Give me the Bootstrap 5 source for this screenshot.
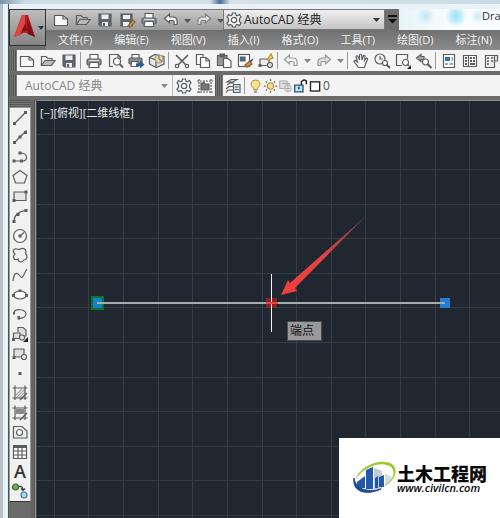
<!DOCTYPE html>
<html lang="zh-CN">
<head>
<meta charset="utf-8">
<meta name="viewport" content="width=device-width, initial-scale=1">
<title>AutoCAD 经典</title>
<link href="https://cdn.jsdelivr.net/npm/bootstrap@5.3.0/dist/css/bootstrap.min.css" rel="stylesheet">
<style>
body{font-family:"Open Sans","Noto Sans CJK SC",sans-serif;font-size:12px;line-height:16px;background:#dfeaf0;color:#333}
.shell{padding:9px 0 0 9px;background:linear-gradient(90deg,#b8c0c4 0 3px,#e6f2f7 3px 8px,#4a525a 8px 9px,transparent 9px),#e9f3f7}
.desk{height:4px;background:linear-gradient(90deg,#7894ad,#cddce4 5%,#d4e0e6 42%,#4e6c96 44%,#d8e2e8 46%,#c8dbe4)}
.app{background:#6b6b6b}
.head{background:linear-gradient(90deg,#6d6d6d,#747474)}
.logo-btn{width:37px;height:37px;background:linear-gradient(#bdbdbd,#858585);border:1px solid #333!important;flex:none}
.titlebar{height:21px;background:#edf6f9}
.quick{width:177px;padding-left:4px;background:linear-gradient(#c7c7c7,#9a9a9a);border-top:1px solid #777}
.tool{width:20px;height:20px;padding:0;border:0;background:none;display:flex;align-items:center;justify-content:center;flex:none;color:#5a5d60}
.tool svg,.stat svg{width:18px;height:18px;display:block}
.tool.caret-tool{width:11px;color:#888}
.caret-tool svg{width:7px;height:5px}
svg.ico{fill:none;stroke:currentColor;stroke-width:1.2}
.quick .tool{width:22px}
.quick .caret-tool{width:11px;color:#555}
.bar .tool[aria-label="undo"],.bar .tool[aria-label="redo"]{color:#9a9a9a}
.quick .tool[aria-label="redo"]{color:#808080}
.picker{position:relative;display:flex;align-items:center}
.picker select{appearance:none;border:0;background:none;width:100%;height:100%;padding:0;font:inherit;line-height:16px;color:inherit;outline:0}
.picker .arrow{position:absolute;right:4px;width:7px;height:5px;pointer-events:none}
.space{width:162px;background:linear-gradient(#f0f0f0,#c4c4c4);border:1px solid #777}
.space select{padding-left:0;color:#222}
.more{width:14px;background:#6e6e6e;color:#111;height:21px}
.more svg{width:9px;height:9px}
.glass{background:radial-gradient(circle at 26px 7px,#bfe6f5 0,transparent 9px),radial-gradient(circle at 57px 7px,#91def5 0,transparent 11px),radial-gradient(circle at 79px 7px,#cae9f3 0,transparent 8px),linear-gradient(90deg,#e6f4f8,#fafdfe 60%);padding-left:83px;flex:1 1 0;min-width:0;color:#333;font-size:11px;line-height:14px}
.menus{height:20px;gap:22px;padding-left:12px;background:linear-gradient(#707070,#8b8b8b);font-size:11px}
.menus a{color:#f2f2f2;text-decoration:none;white-space:nowrap}
.bar{height:21px;background:#f4f4f4;gap:1px}
.grip{width:8px;flex:none;background:repeating-linear-gradient(90deg,#555 0 1px,#777 1px 2px)}
.rule{width:3px;height:17px;border-left:1px solid #999;flex:none}
.rows{padding:0 0 4px;gap:4px}
.style-picker{width:156px;border-right:1px solid #bbb;color:#858585;flex:none}
.style-picker select{padding-left:8px;color:#858585}
.stat{color:#555}
.stat svg{width:15px;height:16px}
.palette{width:22px;flex:none}
.palette .hgrip{height:7px;background:repeating-linear-gradient(#555 0 1px,#777 1px 2px)}
.tools{height:395px;background:#f1f1f1;border:1px solid #999;border-bottom-color:#333}
.tools .tool{height:auto;flex:1 1 0;min-height:0}
.edge{width:6px;flex:none;background:linear-gradient(90deg,#666 0 3px,#555 3px 4px,#999 4px 5px,#444 5px)}
.model{background:#202730;position:relative;overflow:hidden;border-top:1px solid #8d8d8d}
.model>svg{position:absolute;inset:0;width:100%;height:100%}
.view-name{position:relative;padding:4px 3px;font-size:11px;color:#e8e8e8}
.snap-tip{position:absolute;left:250px;top:220px;padding:1px 7px 1px 2px;background:#999;border:1px solid #4c4c4c;color:#111;font-size:12px;line-height:16px}
.brandbox{position:fixed;right:0;bottom:0;width:161px;height:80px;background:#fff;padding-left:14px;color:#090909}
.brandbox svg{width:44px;height:38px;flex:none}
.brand-cn{font-family:"Noto Sans CJK SC",sans-serif;font-weight:900;font-size:18px;line-height:18px}
.brand-url{font-family:"Open Sans",sans-serif;font-style:italic;font-weight:600;font-size:11px;line-height:11px}
</style>
<script src="https://cdn.jsdelivr.net/npm/bootstrap@5.3.0/dist/js/bootstrap.bundle.min.js"></script>
</head>
<body class="min-vh-100 d-flex flex-column overflow-hidden">
<svg class="d-none" aria-hidden="true">
<symbol id="new" viewBox="0 0 18 18"><path d="M2.500 4.500H11L15.500 8V14.500H2.500z" fill="#fafafa"/><path d="M11 4.500V8H15.500"/></symbol>
<symbol id="open" viewBox="0 0 18 18"><path d="M2.500 13.500V4.500H7L9 6.500H13V8.500"/><path d="M2.500 13.500L6 8.500H16L12.500 13.500z" fill="#bbb"/></symbol>
<symbol id="save" viewBox="0 0 18 18"><path d="M3 3H15V15H4.500L3 13.500z" fill="#5b6670"/><path d="M5.500 3.500H12.500V8H5.500z" fill="#eee" stroke="none"/><path d="M6 11H12V15H6z" fill="#eee" stroke="none"/><path d="M8 12V15" stroke-width="2"/></symbol>
<symbol id="saveas" viewBox="0 0 18 18"><path d="M3 3H14V15H3z" fill="#5b6670"/><path d="M5 4H12V8H5zM5 11H11V15H5z" fill="#eee" stroke="none"/><path d="M10 15L15 9L17 11L12 16z" fill="#d6a05c" stroke="#8a6230"/></symbol>
<symbol id="print" viewBox="0 0 18 18"><path d="M5 7V2.500H13V7" fill="#fff"/><rect x="2" y="7" width="14" height="6" rx="1.500" fill="#8b8f92"/><path d="M5 10.500H13L14 15.500H4z" fill="#fff"/><path d="M4 8.500H14" stroke="#ddd"/></symbol>
<symbol id="preview" viewBox="0 0 18 18"><path d="M7 14.500H3.500V2.500H12L14.500 5V7"/><path d="M12 2.500V5H14.500"/><circle cx="11" cy="9.500" r="3.500" fill="#fff"/><path d="M13.500 12L17 15.500" stroke-width="2"/></symbol>
<symbol id="publish" viewBox="0 0 18 18"><path d="M5 6V2.500H12V6" fill="#fff"/><rect x="2" y="6" width="13" height="6" rx="1.500" fill="#8b8f92"/><path d="M4.500 9.500H11V14.500H4z" fill="#fff"/><path d="M9 11.500H13V8.500L17.500 12.500L13 16.500V14H9z" fill="#235f98" stroke="none"/></symbol>
<symbol id="dwf" viewBox="0 0 18 18"><path d="M1.500 5.500L7 2.500L16 4.500V12L8 15.500L1.500 12z" fill="#e6e6e6"/><path d="M1.500 5.500L8 8V15.500"/><circle cx="11" cy="7" r="4" fill="#e5d88a" stroke="#999"/><path d="M11 3V7L14 9.500" stroke="#8d6fa0"/></symbol>
<symbol id="cut" viewBox="0 0 18 18"><path d="M3 3L14 14M15 3L4 14" stroke-width="1.700"/><circle cx="4" cy="14" r="1.700" fill="#fff"/><circle cx="14" cy="14" r="1.700" fill="#fff"/></symbol>
<symbol id="copy" viewBox="0 0 18 18"><path d="M2.500 2.500H9V12.500H2.500z" fill="#fff"/><path d="M6.500 5.500H12L15.500 8.500V15.500H6.500z" fill="#fff"/><path d="M12 5.500V9H15.500"/></symbol>
<symbol id="paste" viewBox="0 0 18 18"><path d="M2.500 3.500H12V13.500H2.500z" fill="#999"/><path d="M5 2H9.500V5H5z" fill="#666"/><path d="M8.500 6.500H13L16 9V15.500H8.500z" fill="#fff"/></symbol>
<symbol id="match" viewBox="0 0 18 18"><rect x="2.500" y="2.500" width="11" height="12" fill="#fff"/><path d="M4.500 5H9V9H4.500z" fill="#3272a5"/><path d="M9 13L14 9L16 12L11 15z" fill="#d89743" stroke="#8b6332"/><path d="M14 10L17 7" stroke="#444"/></symbol>
<symbol id="block" viewBox="0 0 18 18"><path d="M3 7H12V13.500H3z" fill="#eee"/><path d="M1.500 12H4.500V15H1.500z" fill="currentColor" stroke="none"/><circle cx="13" cy="13" r="2.500" fill="#ddd"/><path d="M10 8L14 2L16 6L12 8z" fill="#eecb61" stroke="#b99331"/></symbol>
<symbol id="undo" viewBox="0 0 18 18"><path d="M2.500 7.500L7.500 3V6H11C15 6 15.500 9 15 13.500H12C12.500 10.500 12 9.500 10.500 9.500H7.500V12z" fill="#f5f5f5"/></symbol>
<symbol id="redo" viewBox="0 0 18 18"><path d="M15.500 7.500L10.500 3V6H7C3 6 2.500 9 3 13.500H6C5.500 10.500 6 9.500 7.500 9.500H10.500V12z" fill="#ddd"/></symbol>
<symbol id="down" viewBox="0 0 7 5"><path d="M0 1H7L3.500 5z" fill="currentColor" stroke="none"/></symbol>
<symbol id="downbar" viewBox="0 0 9 9"><path d="M0 0H9V2H0zM0 4H9L4.500 8.500z" fill="currentColor" stroke="none"/></symbol>
<symbol id="hand" viewBox="0 0 18 18"><path d="M6.500 15.500L2 9.500Q2.500 7.500 5.500 10L4 4.500Q5 3 6 4.500L7.500 8L7.500 3Q8.500 1.500 9.500 3L10 8L11.500 3.500Q13 3 13 4.500L12.500 8.500L14.500 6Q16 6 15.500 7.500L13.500 12L12.500 15.500z" fill="#fff"/></symbol>
<symbol id="zoomrt" viewBox="0 0 18 18"><circle cx="7" cy="7" r="5"/><path d="M7 4V7H10"/><circle cx="12" cy="11" r="2.500" fill="#fff"/><path d="M13.500 12.500L17 16" stroke-width="2"/></symbol>
<symbol id="zoomwin" viewBox="0 0 18 18"><path d="M8 13.500H2.500V2.500H13.500V7"/><circle cx="11.500" cy="10.500" r="3" fill="#fff"/><path d="M13.500 12.500L15 14"/><path d="M17 13V17H13z" fill="#222" stroke="none"/></symbol>
<symbol id="zoomprev" viewBox="0 0 18 18"><path d="M1.500 6L6 2.500V4.500H9V7.500H6V9.500z" fill="#aaa"/><circle cx="10.500" cy="10" r="3" fill="#fff"/><path d="M12.500 12L16.500 16" stroke-width="2"/></symbol>
<symbol id="props" viewBox="0 0 18 18"><path d="M3.500 2.500H14.500V15.500H3.500z" fill="#fff"/><path d="M5 5H10V9H5z" fill="#2c76ac" stroke="none"/><path d="M11.500 6H13M11.500 8H13M5 12H8M9.500 12H13" stroke="#357"/></symbol>
<symbol id="design" viewBox="0 0 18 18"><path d="M2.500 3.500H15.500V14.500H2.500zM7.500 3.500V14.500" fill="#fff"/><path d="M4 6H6M4 9H6M4 12H6M9 6H11M12 6H14M9 9H11M12 9H14M9 12H14" stroke-width="2"/></symbol>
<symbol id="palettes" viewBox="0 0 18 18"><path d="M3.500 3.500H12.500V15.500H3.500zM12.500 3.500H15.500V9H12.500" fill="#eee"/><path d="M5 6H7M5 9H7M5 12H7M9 6H11M9 9H11" stroke-width="1.500"/></symbol>
<symbol id="gear" viewBox="0 0 18 18"><path d="M7.500 2H10.500L11 4L12.500 4.700L14.500 3.500L16 6L14.500 7.500V10.500L16 12L14.500 14.500L12.500 13.500L11 14.200L10.500 16H7.500L7 14.200L5.500 13.500L3.500 14.500L2 12L3.500 10.500V7.500L2 6L3.500 3.500L5.500 4.700L7 4z" fill="#f7f7f7"/><circle cx="9" cy="9" r="2.700"/></symbol>
<symbol id="wspace" viewBox="0 0 18 18"><path d="M3 2V16M15 2V16M1 4H17M1 15H17" stroke-dasharray="2 1"/><path d="M5 6H7L8 5L9 7H13V13H5z" fill="#777"/></symbol>
<symbol id="layers" viewBox="0 0 18 18"><path d="M3 5L7 2.500H13L9 5zM3 8L6 6H10M2 12L5 9.500H9M2 15.500L4 13H9M3 5H9" fill="#ddd"/><path d="M9.500 7.500H16V15.500H9.500z" fill="#d9e3e9"/><path d="M11 10H14.500M11 12.500H14.500"/></symbol>
<symbol id="bulb" viewBox="0 0 18 18"><path d="M6.500 11.500C1 7 4 2 9 2S17 7 11.500 11.500V13H6.500z" fill="#fae294" stroke="#b6943b"/><path d="M7 15H11M7.500 16.500H10.500" stroke="#777"/></symbol>
<symbol id="sun" viewBox="0 0 18 18"><circle cx="9" cy="9" r="4" fill="#f7dc88" stroke="#a27f38"/><path d="M9 1V3M9 15V17M1 9H3M15 9H17M3.500 3.500L5 5M13 13L14.500 14.500M3.500 14.500L5 13M13 5L14.500 3.500" stroke="#705b38" stroke-width="1.500"/></symbol>
<symbol id="vpfreeze" viewBox="0 0 18 18"><path d="M2 3H11V12H2zM5 6H14V15" fill="#ddd" stroke="#aaa"/><circle cx="12" cy="12" r="4" fill="#eee" stroke="#aaa"/><path d="M12 9V15M9 12H15" stroke="#aaa"/></symbol>
<symbol id="unlock" viewBox="0 0 18 18"><path d="M2 8H12V16H2z" fill="#bfe1f2" stroke="#275979" stroke-width="1.600"/><path d="M10 8V4Q13 0 16 3V7" stroke="#222" stroke-width="1.700"/><path d="M7 10V13" stroke="#264d69" stroke-width="2"/></symbol>
<symbol id="colorbox" viewBox="0 0 18 18"><rect x="3" y="4" width="11" height="11" fill="#fff" stroke="#222" stroke-width="1.600"/></symbol>
<symbol id="line" viewBox="0 0 18 18"><path d="M3.500 14.500L14.500 3.500"/><path d="M2 13H5V16H2zM13 2H16V5H13z" fill="currentColor" stroke="none"/></symbol>
<symbol id="xline" viewBox="0 0 18 18"><path d="M2.500 15.500L15.500 2.500"/><path d="M2 13H5V16H2zM7.500 7.500H10.500V10.500H7.500zM13 3H16V6H13z" fill="currentColor" stroke="none"/></symbol>
<symbol id="pline" viewBox="0 0 18 18"><path d="M3 13H12Q16 12.500 15.500 9Q15 5 9 5"/><path d="M1.500 11.500H4.500V14.500H1.500zM9 11.500H12V14.500H9zM7.500 3.500H10.500V6.500H7.500z" fill="currentColor" stroke="none"/></symbol>
<symbol id="polygon" viewBox="0 0 18 18"><path d="M9 2.500L16 7.500L13.500 15H4.500L2 7.500z" fill="#eee"/></symbol>
<symbol id="rect" viewBox="0 0 18 18"><path d="M3 5H15V13.500H3z" fill="#e5e5e5"/><path d="M1.500 12H4.500V15H1.500zM13.500 3.500H16.500V6.500H13.500z" fill="currentColor" stroke="none"/></symbol>
<symbol id="arc" viewBox="0 0 18 18"><path d="M3 14.500Q3 5 15 3.500"/><path d="M1.500 13H4.500V16H1.500zM5.500 6H8.500V9H5.500zM13.500 2H16.500V5H13.500z" fill="currentColor" stroke="none"/></symbol>
<symbol id="circle" viewBox="0 0 18 18"><circle cx="9" cy="9" r="6.500" fill="#f8f8f8"/><path d="M9 9L13 5.500"/><path d="M7.500 7.500H10.500V10.500H7.500z" fill="currentColor" stroke="none"/></symbol>
<symbol id="revcloud" viewBox="0 0 18 18"><path d="M4 8C1 6 2 2 6 3Q8 4 9 3C13 1 16 4 14.500 7.500C17 10 16 14 13 14C11 17 7 16 7 13C3 15 1 11 4 8z"/></symbol>
<symbol id="spline" viewBox="0 0 18 18"><path d="M2 15C3 6 6 6 9 10S12 9 16 3"/></symbol>
<symbol id="ellipse" viewBox="0 0 18 18"><ellipse cx="9" cy="9" rx="6.500" ry="4" fill="#f8f8f8"/><path d="M1 8H4V11H1zM14 8H17V11H14zM7.500 3.500H10.500V6H7.500z" fill="currentColor" stroke="none"/></symbol>
<symbol id="elarc" viewBox="0 0 18 18"><path d="M3 8C4 3 15 4 15 9C15 12 11 14 7 13"/><path d="M2 7H4V9.500H2zM6.500 11H9V14.500H6.500z" fill="currentColor" stroke="none"/></symbol>
<symbol id="insert" viewBox="0 0 18 18"><path d="M7 7V2.500H12L15 5V11H11M2.500 8H9V13.500H2.500z" fill="#ddd"/><circle cx="11" cy="12.500" r="2.500" fill="#eee"/><path d="M1 13H4V16H1z" fill="currentColor" stroke="none"/><path d="M17 12V17H12z" fill="#222" stroke="none"/></symbol>
<symbol id="mkblock" viewBox="0 0 18 18"><path d="M3 4H13V12H3z" fill="#ddd"/><circle cx="13" cy="12" r="2.500" fill="#eee"/><path d="M1.500 11H4.500V14H1.500z" fill="currentColor" stroke="none"/></symbol>
<symbol id="point" viewBox="0 0 18 18"><rect x="7.500" y="8" width="3" height="3" fill="currentColor" stroke="none"/></symbol>
<symbol id="hatch" viewBox="0 0 18 18"><path d="M5 11L11 5M5 14L14 5M8 14L14 8" stroke="#aaa"/><path d="M4 1.500V16M14 1.500V16M1.500 4H16.500M1.500 14H16.500"/><path d="M9 16L16 9" stroke-width="1.500"/></symbol>
<symbol id="gradient" viewBox="0 0 18 18"><path d="M5 5H13V10H5z" fill="#888" stroke="none"/><path d="M4 1.500V16M14 1.500V16M1.500 4H16.500M1.500 14H16.500"/><path d="M9 16L16 9"/></symbol>
<symbol id="region" viewBox="0 0 18 18"><path d="M2.500 3.500H11L16 8V15H2.500z" fill="#eee"/><circle cx="8.500" cy="9.500" r="3" fill="#fff"/></symbol>
<symbol id="grid" viewBox="0 0 18 18"><path d="M2.500 3.500H15.500V15.500H2.500zM7 5V15M11 5V15M3 8H15M3 12H15" fill="#fff"/><path d="M2 3.500H16" stroke-width="3"/></symbol>
<symbol id="addsel" viewBox="0 0 18 18"><circle cx="4.500" cy="5" r="3" fill="#7ba45e" stroke="#3a6b2f"/><circle cx="13" cy="13" r="3" fill="#abd7ef" stroke="#477a9b"/><path d="M8 4.500Q12 4 12 8M10 6.500L12 8.500L14 6.500" stroke="#333"/></symbol>
<symbol id="mtext" viewBox="0 0 18 18"><text x="9" y="15" text-anchor="middle" font-family="Open Sans, sans-serif" font-size="18" font-weight="600" fill="#333" stroke="none">A</text></symbol>
</svg>

<div class="shell position-relative flex-grow-1 d-flex flex-column">
<div class="desk position-absolute top-0 start-0 w-100"></div>
<div class="app flex-grow-1 d-flex flex-column">
<header class="head d-flex">
<button class="logo-btn p-0 d-flex align-items-center rounded-0" aria-label="应用程序菜单"><svg width="35" height="34" viewBox="0 0 35 34"><path d="M4 26L12 4H18L25 26L18 23Q14 20 10 24z" fill="#b51d20"/><path d="M12 4H15V13L10 24L4 26z" fill="#dc4543"/><path d="M15 13L18 20Q14 19 11 22z" fill="#8a1015"/><path d="M17 7L25 26L18 23z" fill="#7e1015"/><path d="M28 15H34L31 19z" fill="#26384a"/></svg></button>
<div class="flex-grow-1">
<div class="titlebar d-flex">
<div class="quick d-flex align-items-center flex-shrink-0" data-icons="new,open,save,saveas,print,undo,v,redo,v"></div>
<div class="space picker flex-shrink-0"><button class="tool" aria-label="工作空间设置"><svg class="ico"><use href="#gear"/></svg></button><select aria-label="工作空间"><option>AutoCAD 经典</option></select><svg class="ico arrow"><use href="#down"/></svg></div>
<button class="tool more" aria-label="自定义"><svg class="ico"><use href="#downbar"/></svg></button>
<div class="glass text-nowrap">Dra</div>
</div>
<nav class="menus d-flex align-items-center overflow-hidden"><a href="#">文件(F)</a><a href="#">编辑(E)</a><a href="#">视图(V)</a><a href="#">插入(I)</a><a href="#">格式(O)</a><a href="#">工具(T)</a><a href="#">绘图(D)</a><a href="#">标注(N)</a></nav>
</div>
</header>
<div class="rows d-flex flex-column">
<div class="d-flex"><div class="grip"></div><div class="bar flex-grow-1 d-flex align-items-center overflow-hidden" data-icons="new,open,save,|,print,preview,publish,dwf,|,cut,copy,paste,match,block,|,undo,v,redo,v,|,hand,zoomrt,zoomwin,zoomprev,|,props,design,palettes"></div></div>
<div class="d-flex"><div class="grip"></div>
<div class="bar d-flex align-items-center flex-shrink-0"><div class="picker style-picker h-100"><select aria-label="工作空间列表"><option>AutoCAD 经典</option></select><svg class="ico arrow"><use href="#down"/></svg></div><button class="tool" aria-label="设置"><svg class="ico"><use href="#gear"/></svg></button><button class="tool" aria-label="我的工作空间"><svg class="ico"><use href="#wspace"/></svg></button></div>
<div class="grip"></div>
<div class="bar flex-grow-1 d-flex align-items-center"><button class="tool" aria-label="图层特性"><svg class="ico"><use href="#layers"/></svg></button><div class="rule"></div><div class="stat d-flex align-items-center"><svg class="ico"><use href="#bulb"/></svg><svg class="ico"><use href="#sun"/></svg><svg class="ico"><use href="#vpfreeze"/></svg><svg class="ico"><use href="#unlock"/></svg><svg class="ico"><use href="#colorbox"/></svg><span>0</span></div></div>
</div>
</div>
<div class="flex-grow-1 d-flex">
<aside class="palette"><div class="hgrip"></div><div class="tools d-flex flex-column align-items-center" data-icons="line,xline,pline,polygon,rect,arc,circle,revcloud,spline,ellipse,elarc,insert,mkblock,point,hatch,gradient,region,grid,mtext,addsel"></div></aside>
<div class="edge"></div>
<main class="model flex-grow-1">
<svg aria-hidden="true"><g transform="translate(-37 -101)">
<path d="M54.500 100V2000M88.500 100V2000M123.500 100V2000M158.500 100V2000M192.500 100V2000M227.500 100V2000M262.500 100V2000M296.500 100V2000M331.500 100V2000M365.500 100V2000M400.500 100V2000M435.500 100V2000M469.500 100V2000M37 134.500H3000M37 169.500H3000M37 204.500H3000M37 238.500H3000M37 273.500H3000M37 307.500H3000M37 342.500H3000M37 377.500H3000M37 411.500H3000M37 446.500H3000M37 480.500H3000M37 515.500H3000" stroke="#343c44" fill="none"/>
<rect x="92" y="297" width="11" height="12" fill="#1681c2" stroke="#12702f" stroke-width="2"/>
<rect x="440" y="298" width="10" height="10" fill="#237fd4"/>
<path d="M97 303H445" stroke="#a4adae" stroke-width="2"/>
<rect x="266" y="298" width="11" height="10" fill="#a51e22" opacity=".8"/>
<path d="M271.500 274V332" stroke="#f3f3f3"/><path d="M266 303H278" stroke="#e04b46" stroke-width="2"/>
<path d="M281 295L288 280L290 283L366 216L295 288L297 291z" fill="url(#fade)"/>
<defs><linearGradient id="fade" x1="0" y1="1" x2="1" y2="0"><stop offset="0" stop-color="#f33e3b"/><stop offset=".5" stop-color="#e04448"/><stop offset="1" stop-color="#604047"/></linearGradient></defs>
</g></svg>
<div class="view-name">[−][俯视][二维线框]</div>
<div class="snap-tip">端点</div>
</main>
</div>
</div>
</div>
<div class="brandbox d-flex align-items-center">
<svg viewBox="0 0 44 36" aria-hidden="true"><path d="M4 22L12 16V28H4z" fill="#2458a5"/><path d="M21 8L29 11V29H21z" fill="#c6cbd0"/><path d="M13 10L20 7V29H13z" fill="#2259aa"/><path d="M22 18L25 16V28H22zM26 17L31 15V27H26z" fill="#2259aa"/><path d="M32 13L39 17L36 24L32 26z" fill="#d8dcdf"/><path d="M3 19C7 5 31-3 40 5C47 13 39 23 29 27C41 20 43 12 38 7C29 0 10 7 3 19z" fill="#9bcb26"/><path d="M1 18C-1 32 13 36 28 29C17 32 3 31 1 18z" fill="#1b489a" stroke="#1b489a"/></svg>
<div><div class="brand-cn text-nowrap">土木工程网</div><div class="brand-url">www.civilcn.com</div></div>
</div>
<script>
document.querySelectorAll('[data-icons]').forEach(function (bar) {
  bar.innerHTML = bar.dataset.icons.split(',').map(function (n) {
    if (n === '|') return '<div class="rule"></div>';
    var id = n === 'v' ? 'down' : n;
    return '<button class="tool' + (n === 'v' ? ' caret-tool' : '') + '" aria-label="' + id + '"><svg class="ico"><use href="#' + id + '"/></svg></button>';
  }).join('');
});
</script>
</body>
</html>
